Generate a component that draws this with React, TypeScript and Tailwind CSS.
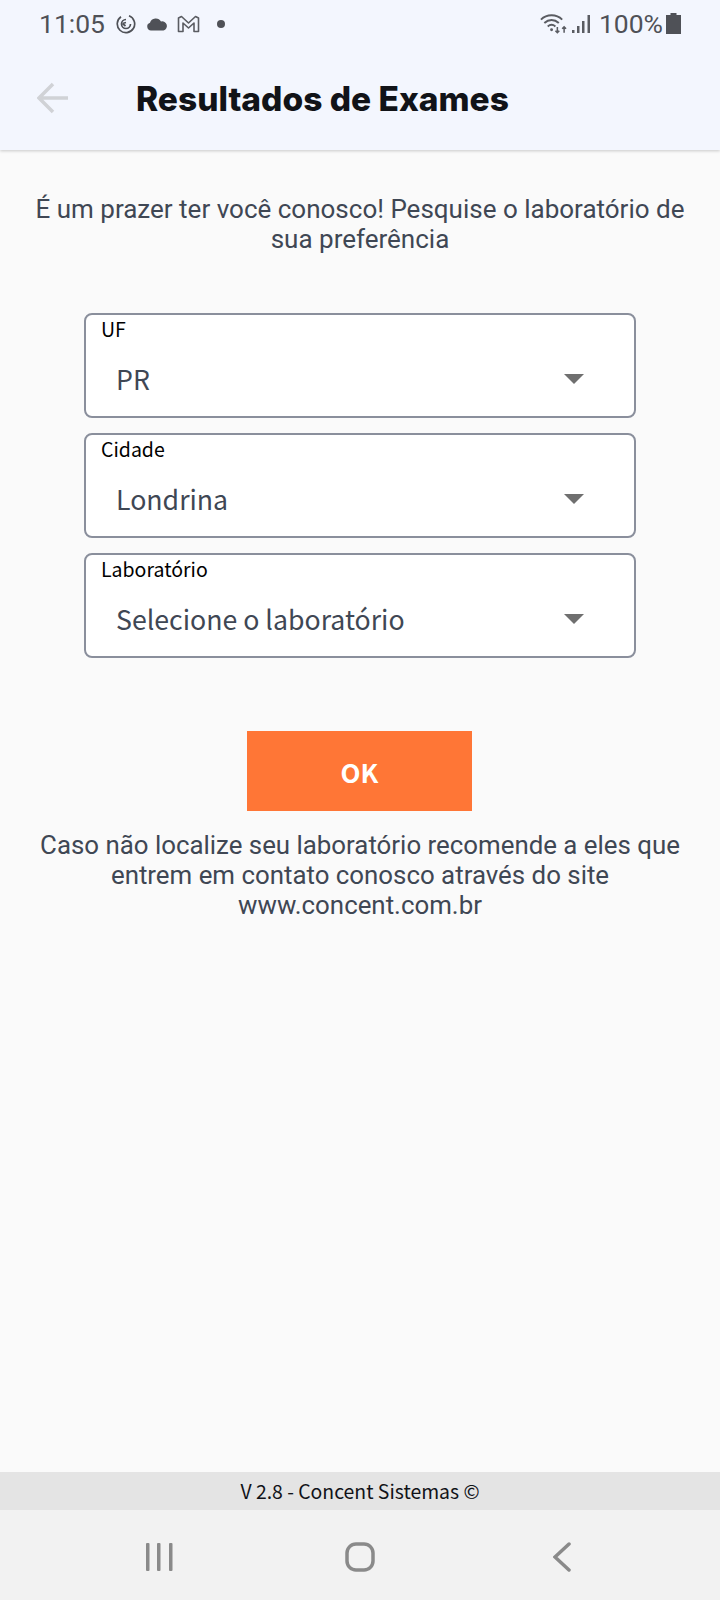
import React from "react";

function Field({ label, value }: { label: string; value: string }) {
  return (
    <div className="h-[105px] w-[552px] rounded-[8px] border-2 border-[#8a8f9c] bg-white">
      <div className="pl-[15px] pt-[1px] font-['Noto_Sans_CJK_JP',sans-serif] text-[19.5px] leading-[26px] text-black">{label}</div>
      <div className="flex items-center justify-between pl-[30px] pr-[50px] pt-[17px]">
        <span className="font-['Noto_Sans_CJK_JP',sans-serif] text-[26.7px] leading-[40px] text-[#3f4754]">{value}</span>
        <span className="h-0 w-0 border-x-[10px] border-t-[10px] border-x-transparent border-t-[#6f6f6f]" />
      </div>
    </div>
  );
}

export default function App() {
  return (
    <div className="flex h-[1600px] w-[720px] flex-col overflow-hidden bg-[#fafafa] font-['Roboto',sans-serif]">
      <header className="h-[150px] shrink-0 bg-[#f3f6fe] shadow-[0_1px_3px_rgba(0,0,0,0.2)]">
        <div className="flex h-[46px] items-center justify-between pl-[39px] pr-[39px] pt-[1px] text-[#4f5157]">
          <div className="flex items-center">
            <span className="text-[26.5px] leading-[32px]">11:05</span>
            <svg className="ml-[11px]" width="20" height="20" viewBox="0 0 20 20" fill="none" stroke="#4f5157" strokeWidth="1.7">
              <path d="M13 1.800A8.700 8.700 0 1 1 5 2.800" />
              <path d="M14.500 10a4.500 4.500 0 1 1-4.500-4.500" />
              <path d="M6.500 9.500l3 2.500M6.500 9.500l3.500-1" />
            </svg>
            <svg className="ml-[10px]" width="22" height="14" viewBox="0 0 22 14" fill="#4f5157">
              <path d="M5 13.500a4 4 0 0 1-1-7.800A6 6 0 0 1 15 4.500a4.600 4.600 0 0 1 2.500 9z" />
            </svg>
            <svg className="ml-[9px]" width="23" height="18" viewBox="0 0 23 18" fill="none" stroke="#5a5c62" strokeWidth="1.600" strokeLinejoin="round">
              <path d="M1.500 16.500V3l3-1.500L11.500 8l7-6.500 3 1.500v13.500h-4.500V8l-5.500 5-5.500-5v8.500z" />
            </svg>
            <span className="ml-[17px] h-[8px] w-[8px] rounded-full bg-[#4f5157]" />
          </div>
          <div className="flex items-center">
            <svg width="27" height="22" viewBox="0 0 28 22" fill="none" stroke="#5a5c62" strokeWidth="2">
              <path d="M1 6.500C7 .5 17 .5 23 6.500M4.500 10C9 5.800 15 5.800 19.500 10M8 13.500c2.500-2 5.500-2 8 0" />
              <circle cx="12" cy="17" r="1.500" fill="#5a5c62" stroke="none" />
              <path d="M18 14v6M16 18l2 2 2-2M25 20v-6M23 16l2-2 2 2" strokeWidth="1.600" />
            </svg>
            <svg className="ml-[5px]" width="18" height="20" viewBox="0 0 18 20" fill="#5a5c62">
              <rect x="0" y="16" width="2.500" height="3" />
              <rect x="5" y="12" width="2.500" height="7" />
              <rect x="10" y="7" width="2.500" height="12" />
              <rect x="15.500" y="1" width="2.500" height="18" />
            </svg>
            <span className="ml-[9px] text-[26.5px] leading-[32px]">100%</span>
            <svg className="ml-[3px]" width="15" height="21" viewBox="0 0 15 21" fill="#4f5157">
              <path d="M4.500 0h6v2H15v19H0V2h4.500z" />
            </svg>
          </div>
        </div>
        <div className="flex h-[60px] items-center pl-[37px] pt-[44px]">
          <svg width="32" height="32" viewBox="0 0 32 32" fill="none" stroke="#d0d2d6" strokeWidth="3.500">
            <path d="M31 16H3M16 2L2 16l14 14" />
          </svg>
          <h1 className="ml-[67px] pt-[2px] font-['Inter',sans-serif] text-[33.500px] font-extrabold leading-[44px] text-[#111318]">Resultados de Exames</h1>
        </div>
      </header>

      <main className="flex flex-1 flex-col items-center">
        <p className="mt-[45px] w-[680px] text-center text-[26px] leading-[29.500px] text-[#3f4754]">
          É um prazer ter você conosco! Pesquise o laboratório de sua preferência
        </p>
        <div className="mt-[59px] flex flex-col gap-[15px]">
          <Field label="UF" value="PR" />
          <Field label="Cidade" value="Londrina" />
          <Field label="Laboratório" value="Selecione o laboratório" />
        </div>
        <button className="mr-[1px] mt-[73px] h-[80px] w-[225px] bg-[#ff7636] font-['Noto_Sans_CJK_JP',sans-serif] text-[26px] font-bold text-white">OK</button>
        <p className="mt-[19px] w-[680px] text-center text-[25.850px] leading-[30px] text-[#3f4754]">
          Caso não localize seu laboratório recomende a eles que entrem em contato conosco através do site www.concent.com.br
        </p>
      </main>

      <div className="flex h-[38px] shrink-0 items-center justify-center bg-[#e4e4e4] font-['Noto_Sans_CJK_JP',sans-serif] text-[19.400px] text-[#111318]">
        V 2.8 - Concent Sistemas ©
      </div>
      <nav className="flex h-[90px] shrink-0 items-center bg-[#f2f2f2] pl-[145px] pt-[3px]">
        <svg width="28" height="28" viewBox="0 0 28 28" fill="#8a8a8a">
          <rect x="1" y="0" width="3.500" height="28" rx="1" />
          <rect x="12" y="0" width="3.500" height="28" rx="1" />
          <rect x="24" y="0" width="3.500" height="28" rx="1" />
        </svg>
        <svg className="ml-[172px]" width="30" height="30" viewBox="0 0 30 30" fill="none" stroke="#8a8a8a" strokeWidth="3.500">
          <rect x="2" y="2" width="26" height="26" rx="9" />
        </svg>
        <svg className="ml-[178px]" width="18" height="30" viewBox="0 0 18 30" fill="none" stroke="#8a8a8a" strokeWidth="3.500" strokeLinecap="round">
          <path d="M16 2L2 15l14 13" />
        </svg>
      </nav>
    </div>
  );
}
